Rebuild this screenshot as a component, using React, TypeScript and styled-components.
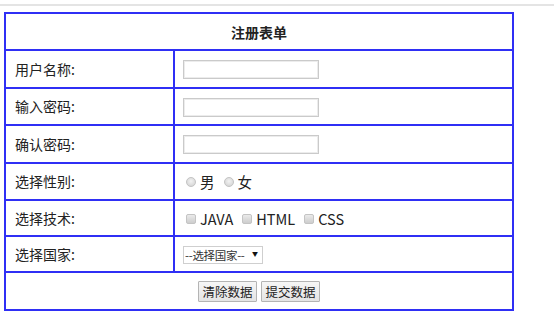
import styled, { createGlobalStyle } from "styled-components";

const GlobalStyle = createGlobalStyle`
  html, body {
    margin: 0;
    padding: 0;
    background: #fff;
  }
  body {
    font-family: "Noto Sans CJK SC", "Liberation Sans", sans-serif;
    color: #222;
  }
`;

const TopLine = styled.div`
  margin-top: 4px;
  height: 2px;
  background: #e4e4e4;
`;

const Page = styled.div`
  padding: 6px 0 0 4px;
`;

const FormTable = styled.table`
  width: 510px;
  border-collapse: collapse;
  font-size: 14px;
`;

const Row = styled.tr<{ $h?: number }>`
  height: ${(p) => p.$h ?? 37.5}px;
`;

const Cell = styled.td<{ $center?: boolean; $bold?: boolean }>`
  border: 2px solid #2f2ff5;
  padding: 0 0 0 8px;
  vertical-align: middle;
  text-align: ${(p) => (p.$center ? "center" : "left")};
  font-weight: ${(p) => (p.$bold ? 700 : 400)};
  line-height: 18px;
`;

const LabelCell = styled(Cell)`
  width: 158px;
  padding-left: 9px;
`;

const TextInput = styled.input`
  box-sizing: border-box;
  width: 136px;
  height: 19px;
  margin: 0;
  border: 1px solid #cacaca;
  box-shadow: inset 0 0 0 1px #ececec;
  outline: none;
  vertical-align: middle;
`;

const Choice = styled.label`
  display: inline-flex;
  align-items: center;
  margin-right: 6px;
  font-size: 14.5px;
`;

const Radio = styled.input`
  appearance: none;
  width: 10px;
  height: 10px;
  margin: 0 4px 0 3px;
  border-radius: 50%;
  border: 1px solid #c4c4c4;
  background: radial-gradient(circle at 50% 40%, #f2f2f2, #cfcfcf);
  box-sizing: border-box;
`;

const Check = styled(Radio)`
  border-radius: 2px;
  background: linear-gradient(#eaeaea, #cdcdcd);
`;

const SelectWrap = styled.div`
  position: relative;
  display: inline-block;
  vertical-align: middle;
`;

const Select = styled.select`
  appearance: none;
  box-sizing: border-box;
  width: 80px;
  height: 18px;
  margin: 0;
  padding: 0 12px 0 1px;
  border: 1px solid #cfcfcf;
  background: #fff;
  font-family: "Noto Sans CJK SC", sans-serif;
  font-size: 11.5px;
  letter-spacing: -0.3px;
  color: #333;
  line-height: 16px;
`;

const Arrow = styled.span`
  position: absolute;
  right: 5px;
  top: 5px;
  font-size: 6px;
  line-height: 7px;
  color: #111;
  pointer-events: none;
`;

const Button = styled.button`
  box-sizing: border-box;
  width: 59px;
  height: 21px;
  margin: 0 2px;
  padding: 0;
  border: 1px solid #b4b4b4;
  border-radius: 1px;
  background: linear-gradient(#f6f6f6, #e4e4e4);
  font-family: "Noto Sans CJK SC", sans-serif;
  font-size: 12.5px;
  color: #222;
  vertical-align: middle;
`;

const fields = ["用户名称:", "输入密码:", "确认密码:"];

export default function App() {
  return (
    <>
      <GlobalStyle />
      <TopLine />
      <Page>
        <FormTable>
          <tbody>
            <Row $h={37}>
              <Cell colSpan={2} $center $bold style={{ paddingLeft: 0 }}>
                注册表单
              </Cell>
            </Row>
            {fields.map((f, i) => (
              <Row key={f}>
                <LabelCell>{f}</LabelCell>
                <Cell>
                  <TextInput type={i === 0 ? "text" : "password"} />
                </Cell>
              </Row>
            ))}
            <Row>
              <LabelCell>选择性别:</LabelCell>
              <Cell>
                <Choice>
                  <Radio type="radio" name="sex" />男
                </Choice>
                <Choice>
                  <Radio type="radio" name="sex" />女
                </Choice>
              </Cell>
            </Row>
            <Row $h={36}>
              <LabelCell>选择技术:</LabelCell>
              <Cell>
                <Choice>
                  <Check type="checkbox" />JAVA
                </Choice>
                <Choice>
                  <Check type="checkbox" />HTML
                </Choice>
                <Choice>
                  <Check type="checkbox" />CSS
                </Choice>
              </Cell>
            </Row>
            <Row $h={36}>
              <LabelCell>选择国家:</LabelCell>
              <Cell>
                <SelectWrap>
                  <Select defaultValue="">
                    <option value="">--选择国家--</option>
                    <option value="cn">中国</option>
                    <option value="us">美国</option>
                  </Select>
                  <Arrow>▼</Arrow>
                </SelectWrap>
              </Cell>
            </Row>
            <Row $h={38}>
              <Cell colSpan={2} $center style={{ paddingLeft: 0 }}>
                <Button type="reset">清除数据</Button>
                <Button type="submit">提交数据</Button>
              </Cell>
            </Row>
          </tbody>
        </FormTable>
      </Page>
    </>
  );
}
